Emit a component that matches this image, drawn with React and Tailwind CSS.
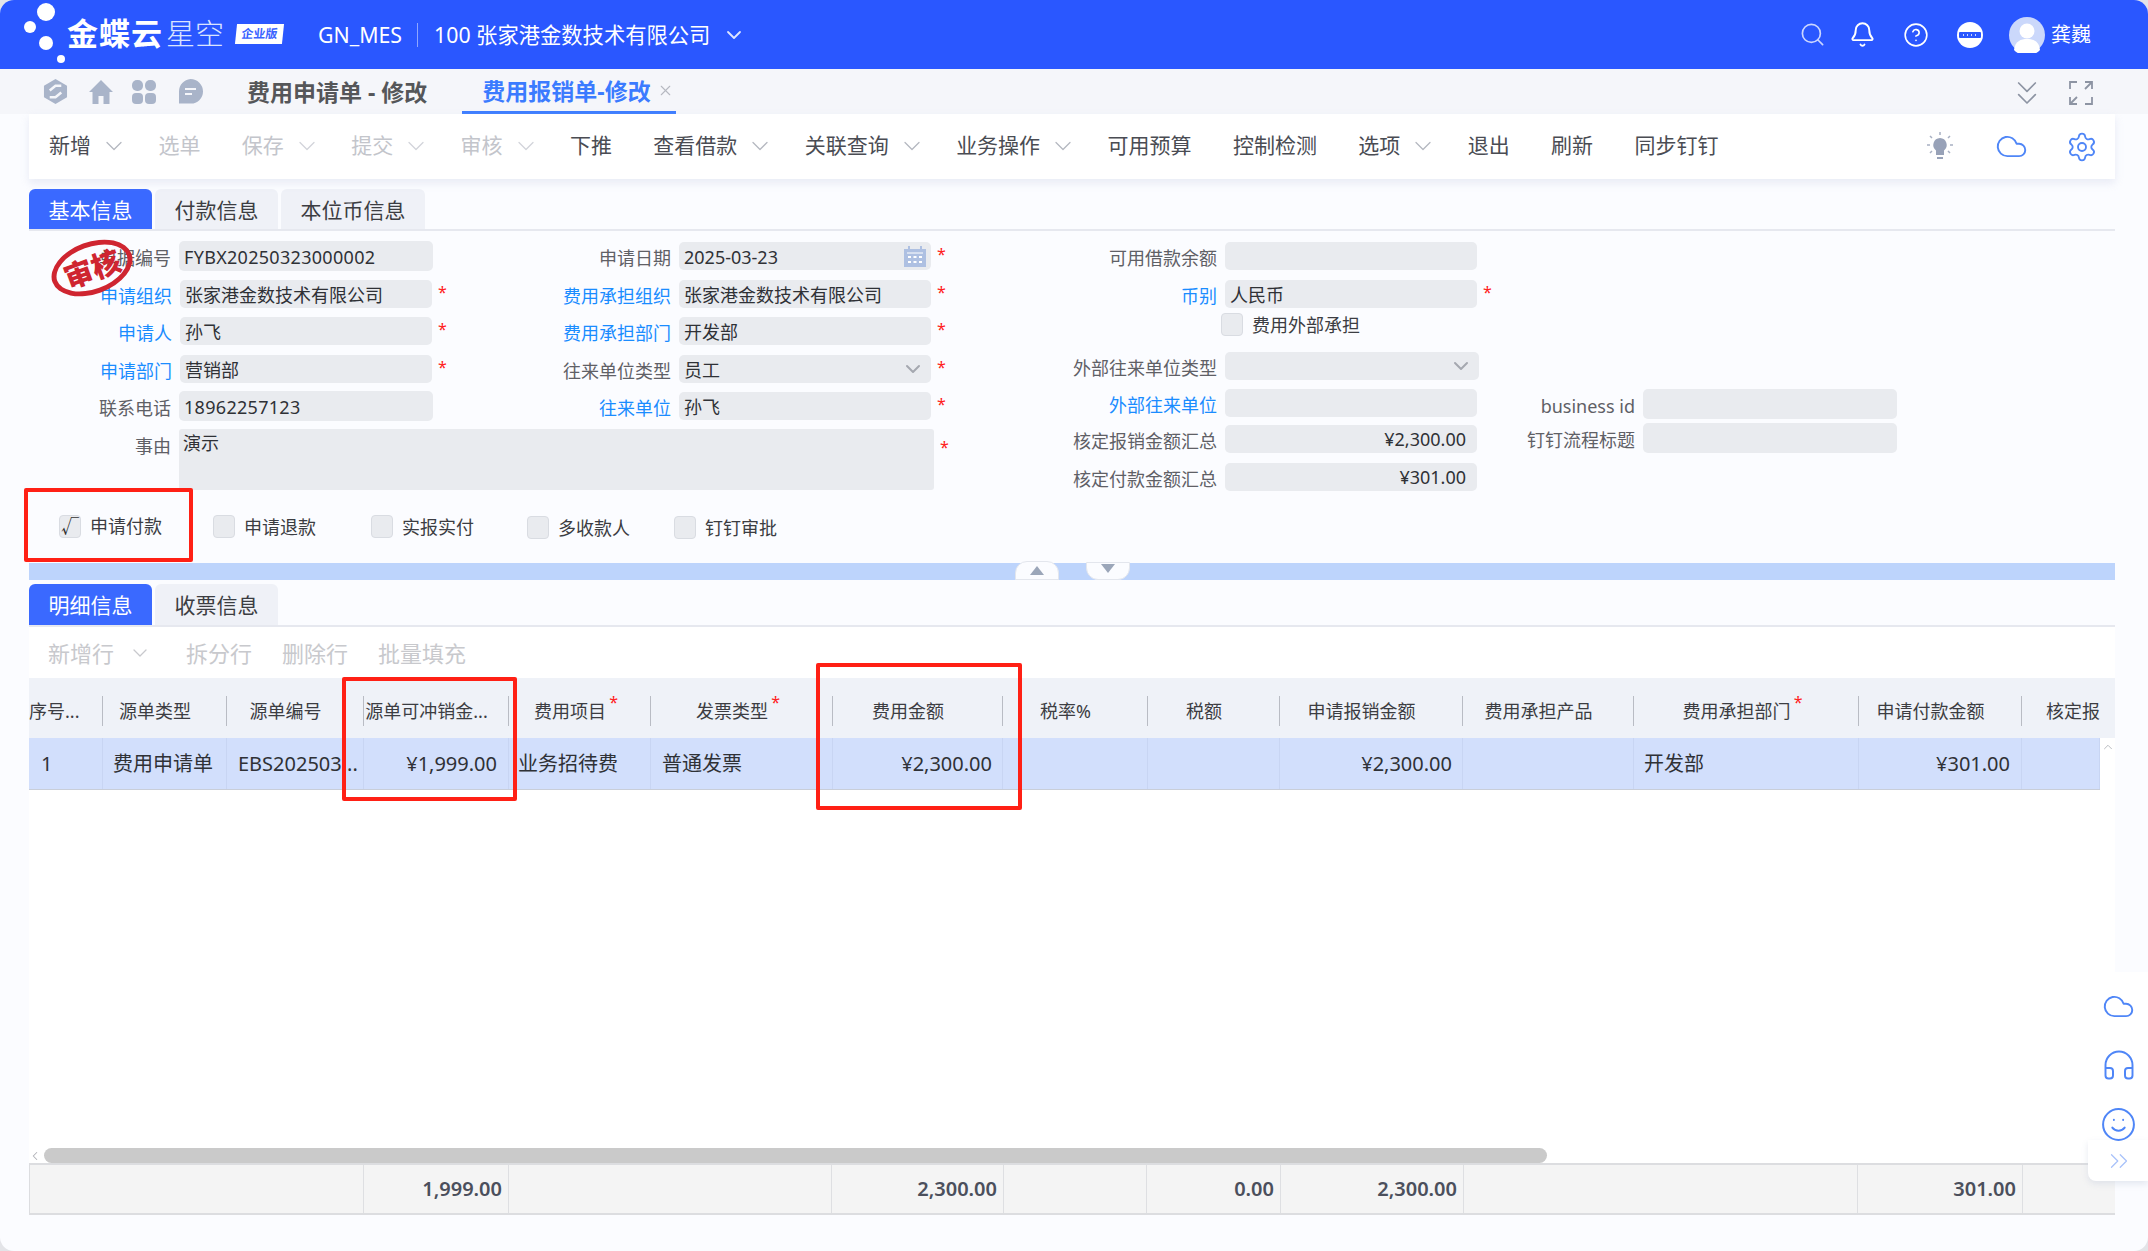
import React from "react";
import { Search, Bell, CircleHelp, ChevronDown, Cloud, Settings, Headphones, Smile, ChevronsRight, ChevronsDown, ChevronLeft, ChevronUp, X } from "lucide-react";

const Chev = ({ dim }) => (
  <ChevronDown className={`ml-[9px] -mr-[11px] w-[28px] h-[28px] ${dim ? "text-[#d2d4da]" : "text-[#b5b8c0]"}`} strokeWidth={1.1} />
);

const toolbar = [
  ["新增", true, false], ["选单", false, true], ["保存", true, true], ["提交", true, true], ["审核", true, true],
  ["下推", false, false], ["查看借款", true, false], ["关联查询", true, false], ["业务操作", true, false],
  ["可用预算", false, false], ["控制检测", false, false], ["选项", true, false], ["退出", false, false], ["刷新", false, false], ["同步钉钉", false, false],
];

function Star({ className = "" }) {
  return <span className={`text-[#ff2020] text-[16px] leading-none self-start mt-[4px] ml-[6px] ${className}`}>*</span>;
}

function Field({ label, value, blue, star, lw, iw, h = "h-[28px]", mt, right, select, cal, latin }) {
  return (
    <div className={`flex items-center ${mt}`}>
      <label className={`${lw} shrink-0 text-right text-[18px] leading-none mt-[4px] ${blue ? "text-[#1a8cff]" : "text-[#5f6066]"}`}>{label}</label>
      <div className={`${iw} ${h} ml-[8px] shrink-0 rounded-[5px] bg-[#e9ebef] flex items-center px-[5px] text-[18px] text-[#2f3136]`}>
        <span className={`flex-1 whitespace-nowrap empty:hidden ${right ? "text-right pr-[6px]" : "pt-[2px]"} ${latin ? "tracking-[0.3px]" : ""}`}>{value}</span>
        {select && <ChevronDown className="w-[24px] h-[24px] text-[#a5a8b0] mr-[1px] ml-auto" strokeWidth={2} />}
        {cal && (
          <svg viewBox="0 0 24 22" className="w-[24px] h-[22px] ml-auto -mr-[1px]">
            <path d="M1 4h22v18H1z" fill="#aec0e2" />
            <path d="M6 1v5M18 1v5" stroke="#aec0e2" strokeWidth="2" />
            <path d="M4 8h16" stroke="#fff" strokeWidth="1" />
            <path d="M5 11h3v2H5zM10.500 11h3v2h-3zM16 11h3v2h-3zM5 16h3v2H5zM10.500 16h3v2h-3zM16 16h3v2h-3z" fill="#fff" />
          </svg>
        )}
      </div>
      {star && <Star />}
    </div>
  );
}

function Check({ label, checked, className }) {
  return (
    <div className={`flex items-center ${className}`}>
      <span className="w-[22px] h-[23px] shrink-0 rounded-[4px] border border-[#d9dce2] bg-[#e9ebef] flex items-center justify-center text-[18px] text-[#333] leading-none">{checked ? "√" : ""}</span>
      <span className="ml-[9px] text-[18px] leading-none text-[#3c3d42] whitespace-nowrap">{label}</span>
    </div>
  );
}

const heads = [
  ["序号...", false, "justify-start"], ["源单类型"], ["源单编号"], ["源单可冲销金..."], ["费用项目", true], ["发票类型", true], ["费用金额"],
  ["税率%"], ["税额"], ["申请报销金额"], ["费用承担产品"], ["费用承担部门", true], ["申请付款金额"], ["核定报", false, "justify-end"],
];

const row = [
  ["1", "pl-[12px]"], ["费用申请单", "pl-[10px]"], ["EBS202503...", "pl-[11px] overflow-hidden"], ["¥1,999.00", "justify-end pr-[11px]"],
  ["业务招待费", "pl-[9px]"], ["普通发票", "pl-[11px]"], ["¥2,300.00", "justify-end pr-[10px]"], ["", ""], ["", ""],
  ["¥2,300.00", "justify-end pr-[10px]"], ["", ""], ["开发部", "pl-[10px]"], ["¥301.00", "justify-end pr-[11px]"], ["", ""],
];

const foot = ["", "1,999.00", "", "2,300.00", "", "0.00", "2,300.00", "", "301.00", ""];

export default function App() {
  return (
    <div className="w-[2148px] h-[1251px] bg-[#e3e4e8]">
      <div className="relative w-full h-full rounded-[14px] overflow-hidden bg-[#fbfcff] flex flex-col [font-family:'Noto_Sans','Noto_Sans_CJK_SC',sans-serif]">
        {/* Header */}
        <header className="h-[69px] shrink-0 bg-[#2a57ff] flex items-center text-white relative">
          <svg viewBox="0 0 70 69" className="absolute left-0 top-0 w-[70px] h-[69px]">
            <circle cx="46" cy="12" r="9" fill="#fff" /><circle cx="30" cy="27" r="6" fill="#fff" />
            <circle cx="46" cy="43" r="7" fill="#fff" /><circle cx="61" cy="59" r="4" fill="#fff" />
          </svg>
          <span className="ml-[67px] text-[31px] font-bold leading-none tracking-[1px] mt-[-2px]">金蝶云</span>
          <span className="ml-[3px] text-[29px] font-light leading-none text-[#dbe4ff] mt-[-2px]">星空</span>
          <span className="ml-[12px] w-[47px] h-[20px] bg-white -skew-x-6 flex items-center justify-center text-[12px] font-bold text-[#3a63ff] leading-none mt-[-1px]">企业版</span>
          <span className="ml-[35px] text-[21.300px] leading-none">GN_MES</span>
          <span className="ml-[15px] w-px h-[24px] bg-[#8fa6ff]" />
          <span className="ml-[16px] text-[21.300px] leading-none">100 张家港金数技术有限公司</span>
          <ChevronDown className="ml-[12px] w-[24px] h-[24px] text-[#dfe6ff]" strokeWidth={1.8} />
          <div className="ml-auto flex items-center">
            <Search className="w-[27px] h-[27px] text-[#cbd6ff]" strokeWidth={1.5} />
            <Bell className="ml-[23px] w-[27px] h-[27px]" strokeWidth={1.7} />
            <CircleHelp className="ml-[27px] w-[26px] h-[26px]" strokeWidth={1.5} />
            <svg viewBox="0 0 26 26" className="ml-[28px] w-[26px] h-[26px]">
              <circle cx="13" cy="13" r="13" fill="#fff" />
              <rect x="2" y="10" width="22" height="6" rx="1" fill="#2a57ff" />
              <path d="M6 13h1M10 13h1M14 13h1M18 13h1" stroke="#fff" strokeWidth="1.500" />
            </svg>
            <svg viewBox="0 0 36 36" className="ml-[26px] w-[36px] h-[36px]">
              <circle cx="18" cy="18" r="18" fill="#cbd8fb" />
              <circle cx="18" cy="14" r="7.500" fill="#fff" />
              <path d="M5 33c1-9 7-11 13-11s12 2 13 11a18 18 0 0 1-26 0z" fill="#fff" />
            </svg>
            <span className="ml-[6px] mr-[57px] text-[20px] leading-none">龚巍</span>
          </div>
        </header>

        {/* Tab bar */}
        <div className="h-[45px] shrink-0 bg-[#f5f6fa] flex items-center relative">
          <svg viewBox="0 0 26 28" className="ml-[43px] w-[25px] h-[27px]">
            <path d="M13 1l12 7v12l-12 7-12-7V8z" fill="#a9b4c9" />
            <path d="M7 13l6-5h6M19 15l-6 5H7" stroke="#f5f6fa" strokeWidth="2.600" fill="none" />
          </svg>
          <svg viewBox="0 0 26 26" className="ml-[20px] w-[26px] h-[26px]">
            <path d="M13 1L25 13h-3.500v12h-6v-8h-5v8h-6V13H1z" fill="#a9b4c9" />
          </svg>
          <svg viewBox="0 0 24 24" className="ml-[18px] w-[24px] h-[24px]">
            <rect x="0" y="0" width="11" height="11" rx="5" fill="#a9b4c9" /><rect x="13" y="0" width="11" height="11" rx="5" fill="#a9b4c9" />
            <rect x="0" y="13" width="11" height="11" rx="4" fill="#a9b4c9" /><rect x="13" y="13" width="11" height="11" rx="4" fill="#a9b4c9" />
          </svg>
          <svg viewBox="0 0 25 25" className="ml-[22px] w-[25px] h-[25px]">
            <path d="M12.500 0a12.500 12.500 0 0 1 12.500 12.500 12 12 0 0 1-12.500 12H1V12.500A12.500 12.500 0 0 1 12.500 0z" fill="#a9b4c9" />
            <path d="M7 10h11M7 15h7" stroke="#f5f6fa" strokeWidth="2" />
          </svg>
          <span className="ml-[44px] text-[23px] font-bold text-[#555659] leading-none whitespace-nowrap pt-[2px]">费用申请单 - 修改</span>
          <div className="ml-[35px] w-[214px] h-[44px] mb-[-1px] flex items-center pl-[20px] border-b-[3px] border-[#3b7bff]">
            <span className="text-[23px] font-bold text-[#3b7bff] leading-none whitespace-nowrap pt-[2px]">费用报销单-修改</span>
            <X className="ml-[6px] w-[17px] h-[17px] text-[#b6b9c1]" strokeWidth={1.5} />
          </div>
          <div className="ml-auto flex items-center mr-[55px] mt-[3px]">
            <ChevronsDown className="w-[40px] h-[40px] text-[#8d94a3]" strokeWidth={1} />
            <svg viewBox="0 0 24 24" className="ml-[22px] w-[24px] h-[24px]" fill="none" stroke="#8d94a3" strokeWidth="1.800">
              <path d="M1 8V1h7M16 1h7v7M23 16v7h-7M8 23H1v-7M16 8l6-6M8 16l-6 6" />
            </svg>
          </div>
        </div>

        {/* Main */}
        <main className="flex-1 ml-[29px] mr-[33px] flex flex-col min-h-0">
          {/* Toolbar */}
          <div className="h-[65px] shrink-0 bg-white shadow-[0_4px_8px_rgba(210,216,232,0.45)] flex items-center pl-[20px] pr-[17px] relative">
            <div className="flex items-center gap-[41.400px] -mt-[2px]">
              {toolbar.map(([t, c, d]) => (
                <div key={t} className={`flex items-center text-[21px] leading-none whitespace-nowrap ${d ? "text-[#c3c5cb]" : "text-[#4a4c53]"}`}>
                  {t}{c && <Chev dim={d} />}
                </div>
              ))}
            </div>
            <div className="ml-auto flex items-center">
              <svg viewBox="0 0 28 30" className="w-[28px] h-[30px]">
                <path d="M14 6a7 7 0 0 1 4 12.500V23h-8v-4.500A7 7 0 0 1 14 6z" fill="#98a2b8" />
                <path d="M11 26h6" stroke="#98a2b8" strokeWidth="2" />
                <path d="M14 0v3M4 4l2 2M24 4l-2 2M1 13h3M24 13h3M4 21l2-2M24 21l-2-2" stroke="#a8b0c2" strokeWidth="1.500" />
              </svg>
              <Cloud className="ml-[41px] w-[33px] h-[33px] text-[#4f86f7]" strokeWidth={1.400} />
              <Settings className="ml-[38px] w-[32px] h-[32px] text-[#4f86f7]" strokeWidth={1.400} />
            </div>
          </div>

          {/* Tabs */}
          <div className="mt-[10px] h-[42px] shrink-0 flex gap-[3px] border-b-2 border-[#e6e8ef] text-[21px] leading-none">
            <div className="w-[123px] pt-[2px] rounded-t-[6px] bg-[#3a69ff] text-white flex items-center justify-center">基本信息</div>
            <div className="w-[123px] pt-[2px] rounded-t-[6px] bg-[#eff1f7] text-[#3c3d42] flex items-center justify-center">付款信息</div>
            <div className="w-[144px] pt-[2px] rounded-t-[6px] bg-[#eff1f7] text-[#3c3d42] flex items-center justify-center">本位币信息</div>
          </div>

          {/* Form */}
          <div className="relative h-[332px] shrink-0 flex">
            <div className="w-[971px] shrink-0 flex flex-col">
              <div className="flex pt-[10px]">
                <div className="w-[442px] shrink-0 flex flex-col">
                  <Field label="单据编号" value="FYBX20250323000002" latin lw="w-[142px]" iw="w-[254px]" h="h-[30px]" />
                  <Field label="申请组织" value="张家港金数技术有限公司" blue star lw="w-[142px]" iw="w-[252px]" mt="mt-[9px] pl-px" />
                  <Field label="申请人" value="孙飞" blue star lw="w-[142px]" iw="w-[252px]" mt="mt-[9px] pl-px" />
                  <Field label="申请部门" value="营销部" blue star lw="w-[142px]" iw="w-[252px]" mt="mt-[10px] pl-px" />
                  <Field label="联系电话" value="18962257123" latin lw="w-[142px]" iw="w-[254px]" h="h-[30px]" mt="mt-[8px]" />
                </div>
                <div className="flex flex-col pt-px">
                  <Field label="申请日期" value="2025-03-23" star cal lw="w-[200px]" iw="w-[252px]" />
                  <Field label="费用承担组织" value="张家港金数技术有限公司" blue star lw="w-[200px]" iw="w-[252px]" mt="mt-[10px]" />
                  <Field label="费用承担部门" value="开发部" blue star lw="w-[200px]" iw="w-[252px]" mt="mt-[9px]" />
                  <Field label="往来单位类型" value="员工" select star lw="w-[200px]" iw="w-[252px]" mt="mt-[10px]" />
                  <Field label="往来单位" value="孙飞" blue star lw="w-[200px]" iw="w-[252px]" mt="mt-[9px]" />
                </div>
              </div>
              <div className="flex mt-[8px]">
                <div className="w-[142px] shrink-0 text-right text-[18px] leading-none mt-[8px] text-[#5f6066]">事由</div>
                <div className="ml-[8px] w-[755px] h-[61px] rounded-[3px] bg-[#e9ebef] text-[18px] leading-none pl-[4px] pt-[5px] text-[#2f3136]">演示</div>
                <span className="text-[#ff2020] text-[16px] leading-none mt-[10px] ml-[6px]">*</span>
              </div>
              <div className="flex mt-[23px]">
                <Check label="申请付款" checked className="ml-[30px]" />
                <Check label="申请退款" className="ml-[51px] mt-[1px]" />
                <Check label="实报实付" className="ml-[55px] mt-[1px]" />
                <Check label="多收款人" className="ml-[53px] mt-[3px]" />
                <Check label="钉钉审批" className="ml-[44px] mt-[3px]" />
              </div>
            </div>
            <div className="w-[500px] shrink-0 flex flex-col pt-[11px]">
              <Field label="可用借款余额" value="" lw="w-[217px]" iw="w-[252px]" />
              <Field label="币别" value="人民币" blue star lw="w-[217px]" iw="w-[252px]" mt="mt-[10px]" />
              <Check label="费用外部承担" className="ml-[221px] mt-[5px]" />
              <Field label="外部往来单位类型" value="" select lw="w-[217px]" iw="w-[254px]" mt="mt-[16px]" />
              <Field label="外部往来单位" value="" blue lw="w-[217px]" iw="w-[252px]" mt="mt-[9px]" />
              <Field label="核定报销金额汇总" value="¥2,300.00" right lw="w-[217px]" iw="w-[252px]" mt="mt-[8px]" />
              <Field label="核定付款金额汇总" value="¥301.00" right lw="w-[217px]" iw="w-[252px]" mt="mt-[10px]" />
            </div>
            <div className="flex flex-col pt-[158px]">
              <Field label="business id" value="" lw="w-[135px]" iw="w-[254px]" h="h-[30px]" />
              <Field label="钉钉流程标题" value="" lw="w-[135px]" iw="w-[254px]" h="h-[30px]" mt="mt-[4px]" />
            </div>
          </div>

          {/* Splitter */}
          <div className="h-[17px] shrink-0 bg-[#bdd4fc] relative">
            <div className="absolute left-[986px] -top-[2px] w-[44px] h-[19px] bg-[#fbfcff] rounded-t-[12px] border border-[#e3e6ed] flex items-center justify-center">
              <span className="w-0 h-0 border-x-[7px] border-x-transparent border-b-[9px] border-b-[#9ba6b9]" />
            </div>
            <div className="absolute left-[1057px] -top-[1px] w-[44px] h-[18px] bg-[#fbfcff] rounded-b-[12px] border border-[#e3e6ed] flex items-start justify-center pt-px">
              <span className="w-0 h-0 border-x-[7px] border-x-transparent border-t-[9px] border-t-[#9ba6b9]" />
            </div>
          </div>

          {/* Detail tabs */}
          <div className="mt-[4px] h-[43px] shrink-0 flex gap-[3px] border-b-2 border-[#e6e8ef] text-[21px] leading-none">
            <div className="w-[123px] pt-[2px] rounded-t-[6px] bg-[#3a69ff] text-white flex items-center justify-center">明细信息</div>
            <div className="w-[123px] pt-[2px] rounded-t-[6px] bg-[#eff1f7] text-[#3c3d42] flex items-center justify-center">收票信息</div>
          </div>
          <div className="h-[51px] shrink-0 bg-white flex items-center pl-[19px] text-[22px] leading-none text-[#c8c9cd] whitespace-nowrap">
            <span>新增行</span>
            <ChevronDown className="ml-[14px] w-[24px] h-[24px]" strokeWidth={1.3} />
            <span className="ml-[34px]">拆分行</span>
            <span className="ml-[30px]">删除行</span>
            <span className="ml-[30px]">批量填充</span>
          </div>

          {/* Table */}
          <div className="h-[60px] shrink-0 bg-[#eff2f8] grid grid-cols-[74px_124px_137px_145px_142px_182px_170px_145px_132px_183px_171px_225px_163px_78px] pr-[15px]">
            {heads.map(([t, s, j], i) => (
              <div key={t} className={`relative flex items-center overflow-hidden text-[18px] leading-none text-[#3c3d42] whitespace-nowrap ${j || "justify-center pr-[20px]"}`}>
                {i < 13 && <span className="absolute right-0 top-[18px] h-[30px] w-px bg-[#b9bcc4]" />}
                <span className="relative mt-[6px]">
                  {t}
                  {s && <span className="absolute -right-[12px] -top-[8px] text-[#ff2020] text-[16px] leading-none">*</span>}
                </span>
              </div>
            ))}
          </div>
          <div className="flex-1 min-h-0 bg-white relative flex flex-col">
            <div className="h-[52px] mr-[15px] bg-[#d2dffc] border-b border-[#c9ced8] grid grid-cols-[74px_124px_137px_145px_142px_182px_170px_145px_132px_183px_171px_225px_163px_78px] text-[20px] leading-none text-[#2f3136]">
              {row.map(([t, c], i) => (
                <div key={i} className={`flex items-center whitespace-nowrap border-r border-[#c8d5f3] ${c}`}>{t}</div>
              ))}
            </div>
            <ChevronUp className="absolute right-[0px] top-[2px] w-[14px] h-[14px] text-[#b0b2b8]" strokeWidth={1.5} />
            <div className="mt-auto h-[15px] flex items-center shrink-0">
              <ChevronLeft className="w-[14px] h-[14px] -ml-[1px] mr-[2px] text-[#b0b2b8]" strokeWidth={1.8} />
              <div className="w-[1503px] h-[15px] rounded-full bg-[#cacaca]" />
            </div>
          </div>
          <div className="h-[52px] shrink-0 bg-[#f4f4f4] border-y-2 border-[#dcdde0] grid grid-cols-[334px_145px_323px_172px_143px_134px_183px_394px_165px_93px] text-[20px] font-semibold leading-none text-[#4b4f5c] border-l border-l-[#dcdde0]">
            {foot.map((t, i) => (
              <div key={i} className={`flex items-center justify-end pr-[6px] ${i < 9 ? "border-r border-[#dedfe2]" : ""}`}>{t}</div>
            ))}
          </div>
          <div className="h-[36px] shrink-0" />
        </main>

        {/* Float rail */}
        <aside className="absolute right-0 top-[972px] w-[33px] h-[168px] bg-white" />
        <aside className="absolute right-0 top-[1140px] w-[60px] h-[41px] bg-white rounded-bl-[8px] shadow-[0_3px_6px_rgba(200,206,222,0.45)] flex items-center justify-center">
          <ChevronsRight className="w-[30px] h-[30px] text-[#a9c2fa] ml-[1px] mt-[1px]" strokeWidth={1} />
        </aside>
        <Cloud className="absolute left-[2102px] top-[990px] w-[33px] h-[33px] text-[#4f86f7]" strokeWidth={1.400} />
        <Headphones className="absolute left-[2101px] top-[1047px] w-[36px] h-[36px] text-[#4f86f7]" strokeWidth={1.300} />
        <Smile className="absolute left-[2100px] top-[1106px] w-[37px] h-[37px] text-[#4f86f7]" strokeWidth={1.300} />

        {/* Stamp */}
        <div className="absolute left-[50px] top-[242px] w-[84px] h-[52px] rounded-[50%] border-[5px] border-[#cf2530] -rotate-[20deg] flex items-center justify-center">
          <span className="text-[29px] font-black text-[#cf2530] leading-none whitespace-nowrap">审核</span>
        </div>

        {/* Red annotation boxes */}
        <div className="absolute left-[24px] top-[488px] w-[169px] h-[74px] border-[4px] border-[#ff2015] rounded-[2px]" />
        <div className="absolute left-[342px] top-[677px] w-[175px] h-[124px] border-[4px] border-[#ff2015] rounded-[2px]" />
        <div className="absolute left-[816px] top-[663px] w-[206px] h-[147px] border-[4px] border-[#ff2015] rounded-[2px]" />
      </div>
    </div>
  );
}
